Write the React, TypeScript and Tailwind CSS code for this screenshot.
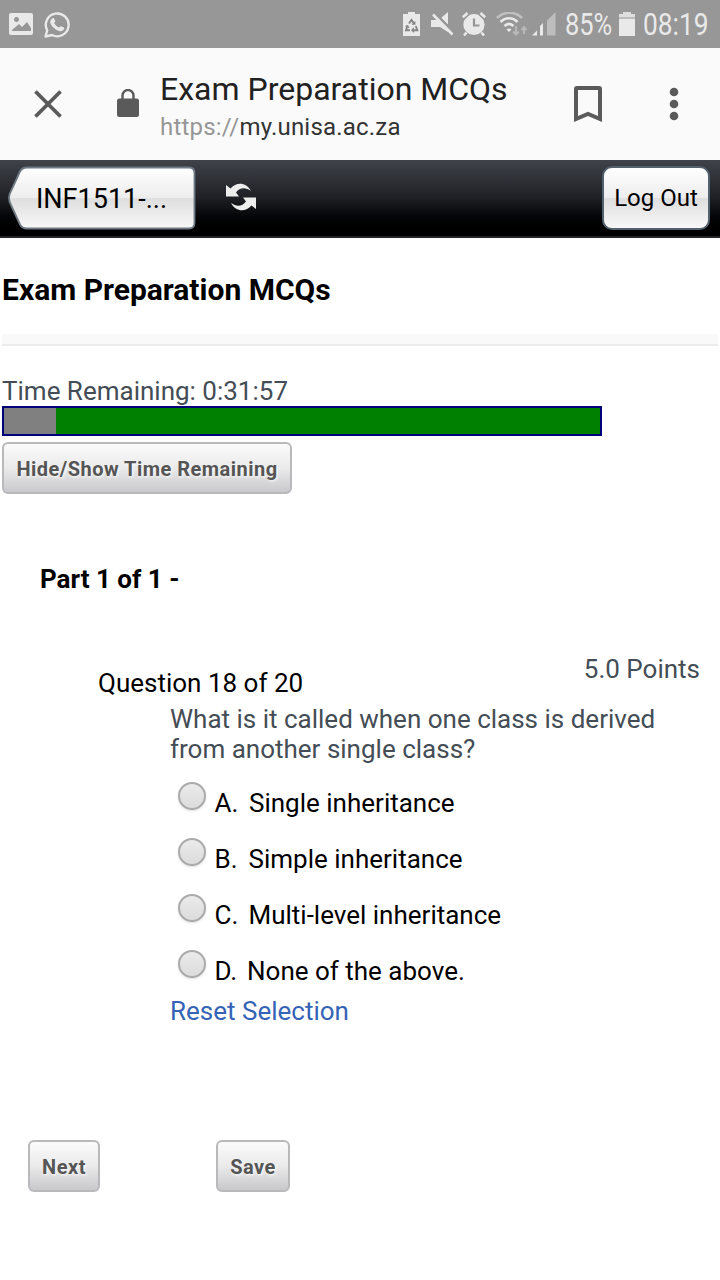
import type { ReactNode } from 'react';

const options = [
  ['A.', 'Single inheritance', 'ml-px'],
  ['B.', 'Simple inheritance', 'ml-[0.5px]'],
  ['C.', 'Multi-level inheritance', 'ml-[0.5px]'],
  ['D.', 'None of the above.', '-ml-px'],
];

function StatusBar() {
  return (
    <header className="flex h-12 items-center bg-[#979797] text-[#e9e9e9]">
      <svg className="ml-[9px] h-6 w-6" viewBox="0 0 24 24">
        <path fill="currentColor" fillRule="evenodd" d="M2 1h20q2 0 2 2v18q0 2-2 2H2q-2 0-2-2V3q0-2 2-2zM3 19h19v-3l-4-6-5 5-3-3-7 6zM7.500 5a2.500 2.500 0 1 0 .01 0z" />
      </svg>
      <svg className="ml-[11px] h-[27px] w-[27px]" viewBox="0 0 27 27">
        <path d="M1.500 25.500l1.700-6.200A11.400 11.400 0 1 1 8 24z" fill="none" stroke="currentColor" strokeWidth="2.400" strokeLinejoin="round" />
        <path d="M8.500 7.200c.6-.3 1.400-.2 1.700.5l1 2.300c.2.600-.2 1-1.100 2.100 1.200 2.200 2.900 3.600 5.100 4.500 1.100-1.300 1.400-1.600 2-1.300l2.600 1.200c.8.400.5 1.600-.1 2.300-1 1.200-3 1.700-4.800 1.100-3.800-1.200-6.700-3.800-8.200-6.800-1-2.100-.4-4.700 1.800-5.900z" fill="currentColor" />
      </svg>
      <div className="ml-[332px] flex items-center">
        <svg className="h-6 w-[17px]" viewBox="0 0 17 24">
          <path d="M5 0h7v2h5v22H0V2h5z" fill="currentColor" />
          <g fill="none" stroke="#858585" strokeWidth="1.900">
            <path d="M6 11.500L8.500 8l2.800 4M4.300 14L3 18.300h4M12.800 14l1.500 4.300H10" />
            <path d="M11.800 9.500v2.700H9M2.500 14.500l2-.8 1.300 2.200M10.800 16l-1.800 2.300 1.800 1.900" strokeWidth="1.300" />
          </g>
        </svg>
        <svg className="ml-[11px] h-6 w-[23px]" viewBox="0 0 23 24">
          <path d="M0 8h7l10 10v2l-8-5H0z" fill="currentColor" />
          <path d="M10 6l7-6v13z" fill="currentColor" />
          <path d="M4 1l18 18" stroke="#979797" strokeWidth="2" />
          <path d="M2 2.500l19.500 20" stroke="currentColor" strokeWidth="2.600" />
        </svg>
        <svg className="ml-[8px] h-6 w-6" viewBox="0 0 24 24">
          <circle cx="12" cy="12.500" r="10.600" fill="currentColor" />
          <path d="M.8 5.800L6 1M18 1l5.200 4.800" stroke="#979797" strokeWidth="5" />
          <path d="M.8 5.200L5.500 1M18.500 1l4.700 4.200M4.500 20.500l-2.500 3M19.500 20.500l2.500 3" stroke="currentColor" strokeWidth="2.600" />
          <path d="M12 6.500v7h5.500" fill="none" stroke="#969696" strokeWidth="2.200" />
        </svg>
        <svg className="ml-[10px] h-6 w-8" viewBox="0 0 32 24">
          <path d="M1 6c7-7 18-7 25 0" fill="none" stroke="#c0c0c0" strokeWidth="2.600" />
          <path d="M4.500 10c5-5 12-5 17 0M8.500 14c3-3 6-3 9 0" fill="none" stroke="currentColor" strokeWidth="2.600" />
          <path d="M10.500 17.500c1.500-1.500 3.500-1.500 5 0l-2.500 2.500z" fill="currentColor" />
          <path d="M20 14v8M17 19.500l3 3 3-3M28 22v-7M25.500 18l2.500-3 2.500 3" fill="none" stroke="#b8b8b8" strokeWidth="2" />
        </svg>
        <svg className="ml-[4px] h-6 w-6" viewBox="0 0 24 24">
          <path d="M0 23.500l5-5v5zM8 23.500V14l3-3v12.500z" fill="currentColor" />
          <path d="M15 23.500V8.500L23.500 0v23.500z" fill="#bdbdbd" />
        </svg>
      </div>
      <span className="ml-[9px] w-[47px] whitespace-nowrap pt-0.5 text-[31px] leading-[50px]"><span className="inline-block origin-left scale-x-[0.82]">85%</span></span>
      <svg className="ml-[7px] h-6 w-4 shrink-0" viewBox="0 0 16 24">
        <path d="M4 0h8v2h4v3H0V2h4z" fill="#dedede" />
        <path d="M0 5h16v2H0z" fill="#bcbcbc" />
        <path d="M0 7h16v17H0z" fill="currentColor" />
      </svg>
      <span className="ml-[8px] w-[66px] whitespace-nowrap pt-0.5 text-[31px] leading-[50px]"><span className="inline-block origin-left scale-x-[0.85]">08:19</span></span>
    </header>
  );
}

function BrowserBar() {
  return (
    <div className="flex h-28 bg-[#fafafa] text-[#5a5a5a]">
      <svg className="mt-[42px] ml-[34px] h-7 w-7" viewBox="0 0 28 28">
        <path d="M1.500 1.500l25 25M26.500 1.500l-25 25" stroke="currentColor" strokeWidth="3.800" />
      </svg>
      <svg className="mt-[41px] ml-[55px] h-[29px] w-[22px]" viewBox="0 0 22 29">
        <rect y="9.500" width="22" height="18.500" rx="2.500" fill="currentColor" />
        <path d="M5.500 11V6.500a5.500 5.500 0 0 1 11 0V11" fill="none" stroke="currentColor" strokeWidth="2.400" />
      </svg>
      <div className="ml-[21px] w-[413px] whitespace-nowrap">
        <div className="mt-[21px] text-[32px] leading-[40px] text-[#212121]">Exam Preparation MCQs</div>
        <div className="text-2xl leading-[36px] tracking-[0.2px] text-[#333]"><span className="text-[#969696]">https://</span>my.unisa.ac.za</div>
      </div>
      <svg className="mt-[38px] ml-px h-9 w-[30px]" viewBox="0 0 30 36">
        <path fillRule="evenodd" fill="currentColor" d="M4 0h21q3 0 3 3v33l-14-6-14 6V3q0-3 3-3zM4 4v26l10-4.300L24 30V4z" />
      </svg>
      <svg className="mt-[39px] ml-[65px] h-[34px] w-2.5" viewBox="0 0 10 34">
        <g fill="currentColor"><circle cx="5" cy="5" r="4.300" /><circle cx="5" cy="17" r="4.300" /><circle cx="5" cy="29" r="4.300" /></g>
      </svg>
    </div>
  );
}

function NavBar() {
  return (
    <nav className="flex h-[78px] items-start border-b-2 border-[#252529] bg-linear-to-b from-[#40434a] via-[#1e2025] via-50% to-black text-black">
      <div className="relative mt-[6px] ml-2 h-16 w-[188px]">
        <svg className="absolute inset-0 h-16 w-[188px]" viewBox="0 0 188 64">
          <defs>
            <linearGradient id="tab" x1="0" y1="0" x2="0" y2="1">
              <stop offset="0" stopColor="#fff" /><stop offset=".5" stopColor="#ededed" />
              <stop offset=".51" stopColor="#dedede" /><stop offset="1" stopColor="#f8f8f8" />
            </linearGradient>
          </defs>
          <path d="M19 1.500h162q5.500 0 5.500 5.500v50q0 5.500-5.500 5.500H19q-5 0-7-4L3 39q-4-7 0-14L12 5.500q2-4 7-4z" fill="url(#tab)" stroke="#6e7983" strokeWidth="1.800" />
        </svg>
        <span className="relative ml-[28px] block text-[27px] leading-[66px]">INF1511-...</span>
      </div>
      <svg className="mt-[23px] ml-[30px] h-7 w-[31px]" viewBox="0 0 31 28">
        <g fill="#ededed">
          <path d="M0 2l4.500 3.500C10-1 20-1.500 25 8c-5-3.500-11-4-15 1.500l3 4H0z" />
          <path d="M30 26l-4.500-3.500C20 29 10 29.500 5 20c5 3.500 11 4 15-1.500l-3-4h13z" />
        </g>
      </svg>
      <button className="mt-[6px] ml-auto mr-[10px] h-16 w-[108px] rounded-[10px] border-2 border-[#53606d] bg-[linear-gradient(#fff,#ededed_50%,#dedede_51%,#f8f8f8)] text-[24px] leading-[60px] whitespace-nowrap">Log Out</button>
    </nav>
  );
}

function GreyButton({ children, className }: { children: ReactNode; className: string }) {
  return (
    <button className={`h-[52px] rounded-md border-2 border-[#b9b9bc] bg-linear-to-b from-[#fbfbfb] via-[#eaeaea] to-[#c9c9cd] pt-px text-[20px] leading-[48px] font-bold tracking-[0.48px] whitespace-nowrap text-[#555] [text-shadow:1px_1px_3px_white] ${className}`}>
      {children}
    </button>
  );
}

export default function App() {
  return (
    <div className="flex h-[1280px] w-[720px] flex-col overflow-hidden bg-white font-['Roboto',sans-serif]">
      <StatusBar />
      <BrowserBar />
      <NavBar />
      <main className="flex flex-col items-start whitespace-nowrap text-[26px] leading-[30px] text-black">
        <h1 className="mt-8 ml-0.5 text-[30px] leading-[40px] font-bold">Exam Preparation MCQs</h1>
        <div className="mt-6 ml-0.5 h-3 w-[716px] border-b-2 border-[#ececec] bg-[#f9f9f9]" />
        <div className="mt-[30px] ml-0.5 text-[#444d55]">Time Remaining: 0:31:57</div>
        <div className="ml-0.5 h-[30px] w-[600px] border-2 border-[#000078] bg-[#008000]">
          <div className="h-full w-[52px] bg-[#808080]" />
        </div>
        <GreyButton className="mt-1.5 ml-0.5 w-[290px]">Hide/Show Time Remaining</GreyButton>
        <h2 className="mt-[70px] ml-10 font-bold">Part 1 of 1 -</h2>
        <div className="mt-[60px] flex w-[700px] justify-between pl-[98px]">
          <span className="mt-3.5">Question 18 of 20</span>
          <span className="text-[#444d55]">5.0 Points</span>
        </div>
        <p className="mt-1.5 ml-[170px] text-[#444d55]">What is it called when one class is derived<br />from another single class?</p>
        <div className="mt-[11px] ml-[178px]">
          {options.map(([letter, text, offset]) => (
            <label key={letter} className="flex h-14 items-start">
              <span className="mt-[7px] h-7 w-7 rounded-full border-2 border-[#aaa] bg-linear-to-b from-[#ebebeb] via-[#e3e3e3] to-[#dcdcdc] shadow-[0_1px_2px_#ddd]" />
              <span className="mt-[13px] ml-[8.5px] w-[33.5px]">{letter}</span>
              <span className={`mt-[13px] ${offset}`}>{text}</span>
            </label>
          ))}
        </div>
        <a className="-mt-[3px] ml-[170px] text-[#3563b5]">Reset Selection</a>
        <div className="mt-[114px] ml-7 flex gap-[116px]">
          <GreyButton className="w-[72px]">Next</GreyButton>
          <GreyButton className="w-[74px]">Save</GreyButton>
        </div>
      </main>
    </div>
  );
}
